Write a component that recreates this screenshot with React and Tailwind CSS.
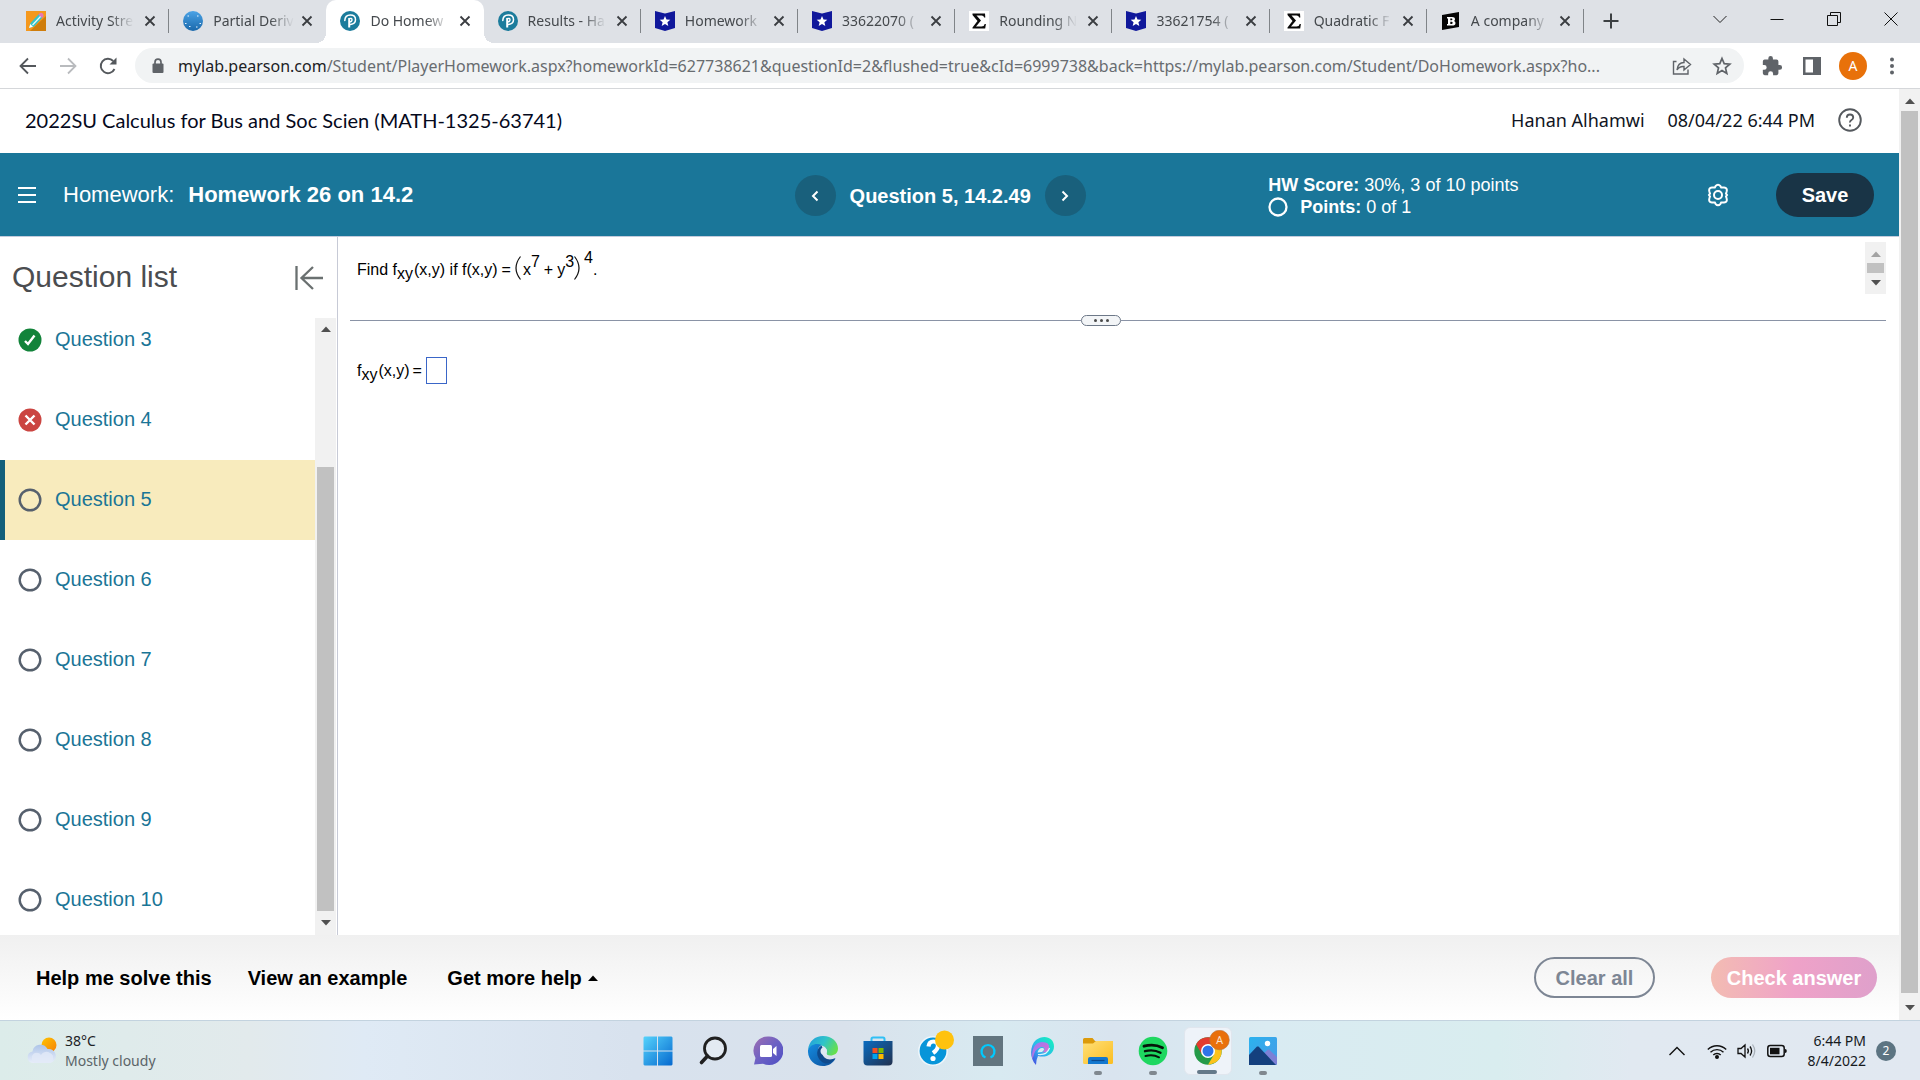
import React from "react";

const ui = "font-['Noto_Sans','Open_Sans',sans-serif]";

/* ---------- favicons ---------- */

const PencilFav = () => (
  <svg viewBox="0 0 20 20" className="size-5 shrink-0">
    <rect width="20" height="20" fill="#f5981d" />
    <path d="M20 5v15H4z" fill="#cf7d0c" />
    <path d="M3 17l1.500-5 8.500-9 3.500 3.500-8.500 9z" fill="#35c4c9" />
    <path d="M6.500 14l8.500-9" stroke="#eafafa" strokeWidth="1.200" />
    <path d="M12.500 3.500l1.500-1.500q1.500-.6 2.700.5t.8 2.700L16 7z" fill="#e678b4" />
    <path d="M3 17l1.300-4 2.700 2.700z" fill="#fff" />
  </svg>
);
const GlobeFav = () => (
  <svg viewBox="0 0 20 20" className="size-5 shrink-0">
    <defs>
      <linearGradient id="globe" x1="0" y1="0" x2="0" y2="1">
        <stop offset="0" stopColor="#4ba3e6" />
        <stop offset="1" stopColor="#1a68ab" />
      </linearGradient>
    </defs>
    <circle cx="10" cy="10" r="10" fill="url(#globe)" />
    <path d="M4.500 5h1.500M14 5h1.500M2 12.500h1.500M16.500 12.500h1.500M6 15.500h1.500M13 16h1.500" stroke="#e8f4ff" />
  </svg>
);
const PearsonFav = () => (
  <svg viewBox="0 0 20 20" className="size-5 shrink-0">
    <circle cx="10" cy="10" r="10" fill="#1c7c9c" />
    <path d="M4.800 9.500Q5 4 10.300 4t5.200 4.700q0 4-5 4.800" fill="none" stroke="#fff" strokeWidth="1.500" strokeLinecap="round" />
    <path d="M9.200 7v9.500" stroke="#fff" strokeWidth="2" />
    <path d="M9 7.600q3-.9 3 1.200t-2.500 2" fill="none" stroke="#fff" strokeWidth="1.400" />
  </svg>
);
const StarFav = () => (
  <svg viewBox="0 0 20 20" className="size-5 shrink-0">
    <path d="M0 0l10 2.500L20 0v17l-10 3-10-3z" fill="#10189b" />
    <path d="M10 5l1.500 3.500 3.800.3-2.900 2.500.9 3.700L10 13l-3.300 2 .9-3.700-2.900-2.500 3.800-.3z" fill="#fff" />
  </svg>
);
const SigmaFav = () => (
  <svg viewBox="0 0 20 20" className="size-5 shrink-0">
    <rect width="20" height="20" fill="#fff" />
    <path d="M3.500 2.500h12.500l.3 4h-1.200q-.3-2-2.500-2H7.500l4.500 5-5 6h5.500q2.700 0 3.200-2.500h1.200l-.7 4.500H3.500v-1l5-6.500-5-6z" fill="#0a0a0a" />
  </svg>
);
const BartlebyFav = () => (
  <svg viewBox="0 0 20 20" className="size-5 shrink-0">
    <path d="M1 4l17-3v15L1 19z" fill="#050505" />
    <path d="M6 6h5q3 0 3 2.200 0 1.300-1 1.700 1.500.4 1.500 2 0 2.600-3.500 2.600H6v-1.500h1V7.500H6zm3.300 1.500v1.700h1.200q.9 0 .9-.9t-.9-.8zm0 3.200V13h1.300q1 0 1-1.200t-1-1.100z" fill="#fff" fillRule="evenodd" />
  </svg>
);

const tabs = [
  { Icon: PencilFav, title: "Activity Stre" },
  { Icon: GlobeFav, title: "Partial Deriv" },
  { Icon: PearsonFav, title: "Do Homew", active: true },
  { Icon: PearsonFav, title: "Results - Ha" },
  { Icon: StarFav, title: "Homework" },
  { Icon: StarFav, title: "33622070 (" },
  { Icon: SigmaFav, title: "Rounding N" },
  { Icon: StarFav, title: "33621754 (" },
  { Icon: SigmaFav, title: "Quadratic F" },
  { Icon: BartlebyFav, title: "A company" },
];

const CloseIcon = () => (
  <svg viewBox="0 0 12 12" className="size-3">
    <path d="M1.500 1.500l9 9M10.500 1.500l-9 9" stroke="#3a3d41" strokeWidth="1.800" />
  </svg>
);

function TabStrip() {
  return (
    <div className="flex h-[43px] bg-[#dee1e6]">
      <div role="tablist" className="flex min-w-0 flex-1 pl-3">
        {tabs.map(({ Icon, title, active }, i) => (
          <div
            key={i}
            className={
              active
                ? "relative flex min-w-0 flex-1 items-center rounded-t-[10px] bg-white pr-[13px] pb-0.5 pl-3.5"
                : "flex min-w-0 flex-1 items-center pr-[13px] pb-0.5 pl-3.5"
            }
          >
            {active && (
              <>
                <span className="absolute bottom-0 -left-2.5 size-2.5 bg-[radial-gradient(circle_at_0_0,#dee1e6_10px,white_10px)]" />
                <span className="absolute -right-2.5 bottom-0 size-2.5 bg-[radial-gradient(circle_at_100%_0,#dee1e6_10px,white_10px)]" />
              </>
            )}
            <button role="tab" aria-selected={!!active} className="flex min-w-0 flex-1 items-center gap-2.5">
              <Icon />
              <span className="flex-1 text-left text-sm whitespace-nowrap text-[#45494d] [mask-image:linear-gradient(to_right,black_70%,transparent)]">
                {title}
              </span>
            </button>
            <button aria-label="Close tab" className="ml-2.5 flex size-3 items-center justify-center">
              <CloseIcon />
            </button>
            {i !== 1 && !active && <span className="-mr-[13px] ml-3 h-6 w-px bg-[#808488]" />}
          </div>
        ))}
      </div>
      <div className="flex w-[336px] items-center pb-0.5">
        <button aria-label="New tab" className="ml-[19px] flex size-4 items-center justify-center">
          <svg viewBox="0 0 16 16" className="size-4"><path d="M8 .5v15M.5 8h15" stroke="#3c4043" strokeWidth="2" /></svg>
        </button>
        <div className="ml-auto flex items-start gap-[43px] pr-[22px] pb-1">
          <button aria-label="Search tabs"><svg viewBox="0 0 14 14" className="size-3.5" fill="none" stroke="#222"><path d="M.5 4L7 10.500 13.500 4" /></svg></button>
          <button aria-label="Minimize"><svg viewBox="0 0 14 14" className="size-3.5" stroke="#111"><path d="M.5 7.500h13" /></svg></button>
          <button aria-label="Restore"><svg viewBox="0 0 14 14" className="size-3.5" fill="none" stroke="#111"><path d="M.5 3.500h10v10H.5zM3.500 3.500v-3h10v10h-3" /></svg></button>
          <button aria-label="Close window"><svg viewBox="0 0 14 14" className="size-3.5" stroke="#111"><path d="M.5 .5l13 13M13.500 .5l-13 13" /></svg></button>
        </div>
      </div>
    </div>
  );
}

function Toolbar() {
  return (
    <div className="flex items-center border-b border-[#d5d7da] bg-white py-[5px] pr-[25px]">
      <div className="flex w-[135px] items-center gap-5 pl-[18px]">
        <button aria-label="Back"><svg viewBox="0 0 20 20" className="size-5" fill="none" stroke="#54585c" strokeWidth="1.800"><path d="M18 10H3M10 2.500L2.500 10l7.500 7.500" /></svg></button>
        <button aria-label="Forward"><svg viewBox="0 0 20 20" className="size-5" fill="none" stroke="#b9bbbe" strokeWidth="1.800"><path d="M2 10h15M10 2.500l7.500 7.500-7.500 7.500" /></svg></button>
        <button aria-label="Reload"><svg viewBox="0 0 20 20" className="size-5"><path d="M16.500 13a7.200 7.200 0 1 1-1.300-8" fill="none" stroke="#54585c" strokeWidth="1.900" /><path d="M18.500 1.500v7h-7z" fill="#54585c" /></svg></button>
      </div>
      <div className="flex h-[35px] min-w-0 flex-1 items-center rounded-full bg-[#f1f3f4] pr-3 pl-4">
        <svg viewBox="0 0 14 16" className="h-4 w-3.5 shrink-0"><rect x="1.500" y="5.500" width="11" height="9.500" rx="1" fill="#5f6368" /><path d="M4 6V4.200a3 3 0 0 1 6 0V6" fill="none" stroke="#5f6368" strokeWidth="1.700" /></svg>
        <span className="ml-[13px] min-w-0 flex-1 overflow-hidden text-base whitespace-nowrap text-[#686c70]">
          <span className="text-[#202124]">mylab.pearson.com</span>/Student/PlayerHomework.aspx?homeworkId=627738621&amp;questionId=2&amp;flushed=true&amp;cId=6999738&amp;back=https://mylab.pearson.com/Student/DoHomework.aspx?ho...
        </span>
        <div className="flex gap-5">
          <button aria-label="Share"><svg viewBox="0 0 20 20" className="size-5" fill="none" stroke="#5f6368" strokeWidth="1.400"><path d="M4.500 5.500h-3V18h14.500v-4.500" /><path d="M5 14q.8-7.500 7-7.500V3l6.500 5.500L12 14v-3.500Q7.500 10 5 14z" /></svg></button>
          <button aria-label="Bookmark"><svg viewBox="0 0 20 20" className="size-5" fill="none" stroke="#5f6368" strokeWidth="1.700"><path d="M10 2.500l2.200 5.200 5.600.5-4.300 3.700 1.300 5.500L10 14.500l-4.800 2.900 1.300-5.500-4.300-3.700 5.600-.5z" /></svg></button>
        </div>
      </div>
      <div className="flex items-center pl-[17px]">
        <button aria-label="Extensions"><svg viewBox="0 0 24 24" className="size-[22px]" fill="#5f6368"><path d="M20.500 11H19V7a2 2 0 0 0-2-2h-4V3.500a2.500 2.500 0 0 0-5 0V5H4a2 2 0 0 0-2 2v3.800h1.500a2.700 2.700 0 0 1 0 5.400H2V20a2 2 0 0 0 2 2h3.800v-1.500a2.700 2.700 0 0 1 5.400 0V22H17a2 2 0 0 0 2-2v-4h1.500a2.500 2.500 0 0 0 0-5z" /></svg></button>
        <button aria-label="Side panel" className="ml-5"><svg viewBox="0 0 18 18" className="size-[18px]"><path d="M0 0h18v18H0zM2.500 2.500v13H10v-13z" fill="#5f6368" fillRule="evenodd" /></svg></button>
        <button aria-label="Profile" className="ml-[18px] flex size-7 items-center justify-center rounded-full bg-[#e8710a] text-sm text-white">A</button>
        <button aria-label="Menu" className="ml-[22px]"><svg viewBox="0 0 6 18" className="h-[18px] w-1.5" fill="#5f6368"><circle cx="3" cy="2.500" r="2" /><circle cx="3" cy="9" r="2" /><circle cx="3" cy="15.500" r="2" /></svg></button>
      </div>
    </div>
  );
}

/* ---------- page ---------- */

const Up = ({ color = "#505050" }) => <svg viewBox="0 0 10 6" className="h-1.5 w-2.5 shrink-0"><path d="M0 6l5-5.500L10 6z" fill={color} /></svg>;
const Down = ({ color = "#505050" }) => <svg viewBox="0 0 10 6" className="h-1.5 w-2.5 shrink-0"><path d="M0 0l5 5.500L10 0z" fill={color} /></svg>;

const OpenCircle = () => <svg viewBox="0 0 24 24" className="size-6" fill="none" stroke="#56606d" strokeWidth="2.400"><circle cx="12" cy="12" r="10.300" /></svg>;
const Correct = () => <svg viewBox="0 0 24 24" className="size-6" fill="none"><circle cx="12" cy="12" r="11.500" fill="#12833a" /><path d="M7 13l3 3 6.500-8.500" stroke="#fff" strokeWidth="2.400" /></svg>;
const Wrong = () => <svg viewBox="0 0 24 24" className="size-6" fill="none"><circle cx="12" cy="12" r="11.500" fill="#cb4541" /><path d="M7.500 7.500l9 9M16.500 7.500l-9 9" stroke="#fff" strokeWidth="2.400" /></svg>;

const questions = [3, 4, 5, 6, 7, 8, 9, 10];

function Sidebar() {
  return (
    <aside className="flex w-[338px] shrink-0 flex-col border-r border-[#c7cad6]">
      <div className="flex h-[81px] shrink-0 items-center justify-between pr-3.5 pl-3">
        <h2 className="pb-0.5 text-3xl text-[#4b4d50]">Question list</h2>
        <button aria-label="Collapse question list">
          <svg viewBox="0 0 28 26" className="h-[26px] w-7" fill="none" stroke="#6a7070" strokeWidth="2.300"><path d="M1.500 1v24M28 13H6M18 2L6.500 13 18 24" /></svg>
        </button>
      </div>
      <div className="flex min-h-0 flex-1">
        <ul className="-mt-[18px] min-w-0 flex-1 overflow-hidden">
          {questions.map((n) => (
            <li
              key={n}
              className={n === 5 ? "h-20 border-l-[5px] border-[#135f7a] bg-[#f8ebbd] pl-[13px]" : "h-20 pl-[18px]"}
            >
              <a href="#" className="flex h-full items-center gap-[13px] text-xl text-[#1a7596]">
                {n === 3 ? <Correct /> : n === 4 ? <Wrong /> : <OpenCircle />}
                <span className="pb-0.5">Question {n}</span>
              </a>
            </li>
          ))}
        </ul>
        <div className="mr-px flex w-[21px] flex-col items-center bg-[#f1f1f1] pt-2 pb-[9px]">
          <Up />
          <div className="mt-[135px] mb-[9px] w-[17px] flex-1 bg-[#c1c1c1]" />
          <Down />
        </div>
      </div>
    </aside>
  );
}

const Fxy = () => (
  <>f<span className="align-[-4px] text-base leading-none">xy</span><span className="pl-px">(x,y)</span></>
);
const Power = ({ children }) => <span className="align-[8px] text-base leading-none">{children}</span>;

function Problem() {
  return (
    <main className="flex min-w-0 flex-1 flex-col pr-[13px] pl-3">
      <div className="flex h-[78px] justify-between pt-[5px] pl-[7px]">
        <p className="text-base leading-[56px] text-black">
          Find <Fxy /> if f(x,y)<span className="px-1">=</span>
          <svg viewBox="0 0 6 24" className="inline h-6 w-1.5 align-[-5px]" fill="none" stroke="#111" strokeWidth="1.200"><path d="M5.500 .5q-9 11.500 0 23" /></svg>
          <span className="pl-0.5">x<Power>7</Power></span><span className="px-1">+</span>y<Power>3</Power>
          <svg viewBox="0 0 6 24" className="inline h-6 w-1.5 align-[-5px]" fill="none" stroke="#111" strokeWidth="1.200"><path d="M.5 .5q9 11.500 0 23" /></svg>
          <span className="pl-1 align-[12px] text-base leading-none">4</span>.
        </p>
        <div className="flex h-[52px] w-[21px] flex-col items-center bg-[#f1f1f1] pt-[9px] pb-2">
          <Up color="#a3a3a3" />
          <div className="mt-1.5 h-2.5 w-[17px] bg-[#c1c1c1]" />
          <div className="mt-auto flex"><Down /></div>
        </div>
      </div>
      <div className="flex items-center">
        <div className="h-px flex-[731] bg-[#8a93a6]" />
        <button aria-label="Resize panes" className="flex h-[11px] w-10 items-center justify-center gap-[3px] rounded-full border border-[#6d7888] bg-[#f3f5f7]">
          <span className="size-[3px] rounded-full bg-[#4a4a4a]" />
          <span className="size-[3px] rounded-full bg-[#4a4a4a]" />
          <span className="size-[3px] rounded-full bg-[#4a4a4a]" />
        </button>
        <div className="h-px flex-[765] bg-[#8a93a6]" />
      </div>
      <div className="flex items-center pt-[31px] pl-[7px] text-base text-black">
        <label htmlFor="answer"><Fxy /><span className="pl-[3px]">=</span></label>
        <input id="answer" className="ml-1 h-[27px] w-[21px] border border-[#3a66c8] bg-white outline-none" />
      </div>
    </main>
  );
}

function Banner() {
  return (
    <div className="grid h-[84px] shrink-0 grid-cols-[795fr_474fr_631fr] items-center border-b border-[#c3cbdc] bg-[#1a7699] text-white">
      <div className="flex items-center pl-4">
        <button aria-label="Menu"><svg viewBox="0 0 22 18" className="h-[18px] w-[22px]" stroke="#fff" strokeWidth="2"><path d="M2 2h18M2 9h18M2 16h18" /></svg></button>
        <h1 className="ml-[25px] flex gap-3.5 text-[22px]">Homework: <b>Homework 26 on 14.2</b></h1>
      </div>
      <div className="flex items-center gap-3.5 pt-0.5 text-xl font-bold">
        <button aria-label="Previous question" className="flex size-[41px] items-center justify-center rounded-full bg-[#19607c]">
          <svg viewBox="0 0 8 12" className="h-3 w-2" fill="none" stroke="#fff" strokeWidth="2"><path d="M6.500 1.500L2 6l4.500 4.500" /></svg>
        </button>
        <span>Question 5, 14.2.49</span>
        <button aria-label="Next question" className="flex size-[41px] items-center justify-center rounded-full bg-[#19607c]">
          <svg viewBox="0 0 8 12" className="h-3 w-2" fill="none" stroke="#fff" strokeWidth="2"><path d="M1.500 1.500L6 6l-4.500 4.500" /></svg>
        </button>
      </div>
      <div className="flex items-center pr-[25px]">
        <div className="flex-1 pt-0.5 text-lg leading-[22px]">
          <div><b>HW Score:</b> 30%, 3 of 10 points</div>
          <div className="flex items-center gap-3">
            <svg viewBox="0 0 20 20" className="size-5" fill="none" stroke="#fff" strokeWidth="2.300"><circle cx="10" cy="10" r="8.500" /></svg>
            <span><b>Points:</b> 0 of 1</span>
          </div>
        </div>
        <button aria-label="Settings">
          <svg viewBox="0 0 24 24" className="size-6" fill="none" stroke="#fff" strokeWidth="2"><path d="M9.500 3.200Q12 .2 14.500 3.200L15.200 4.600 18 4.500Q21.800 5 20.600 8.800L20 10.500 21 12 20 13.500 20.600 15.200Q21.800 19 18 19.500L15.200 19.400 14.500 20.800Q12 23.800 9.500 20.800L8.800 19.400 6 19.500Q2.200 19 3.400 15.200L4 13.500 3 12 4 10.500 3.400 8.800Q2.200 5 6 4.500L8.800 4.600z" /><circle cx="12" cy="12" r="4" /></svg>
        </button>
        <button className="ml-[46px] h-11 w-[98px] rounded-full bg-[#193446] text-xl font-bold">Save</button>
      </div>
    </div>
  );
}

function Footer() {
  return (
    <footer className="flex h-[85px] shrink-0 items-center bg-linear-to-b from-[#f0f0f0] to-white pr-[22px] pl-9 text-xl font-bold text-black">
      <div className="flex flex-1 items-center gap-9">
        <button>Help me solve this</button>
        <button>View an example</button>
        <button className="ml-1 flex items-center gap-1.5">Get more help <svg viewBox="0 0 10 6" className="h-1.5 w-2.5"><path d="M0 6l5-5.500L10 6z" fill="#000" /></svg></button>
      </div>
      <button className="h-[41px] w-[121px] rounded-full border-2 border-[#7d8694] text-[#7d8694]">Clear all</button>
      <button className="ml-14 h-[41px] w-[166px] rounded-full bg-linear-to-r from-[#f3bcb2] via-[#efa2c8] to-[#dfa0cb] text-white">Check answer</button>
    </footer>
  );
}

/* ---------- taskbar ---------- */

const WindowsIcon = () => (
  <svg viewBox="0 0 30 30" className="size-[30px]">
    <defs><linearGradient id="win" x1="0" y1="0" x2="1" y2="1"><stop offset="0" stopColor="#55d3fc" /><stop offset="1" stopColor="#0669cf" /></linearGradient></defs>
    <path d="M1.500 .5H14v14H.5v-13zM15 .5h13.500l1 1v13H15zM.5 15.500H14v14H1.500l-1-1zM15 15.500h14.500v13l-1 1H15z" fill="url(#win)" />
  </svg>
);
const SearchIcon = () => (
  <svg viewBox="0 0 30 30" className="size-[30px]" fill="none" stroke="#202020" strokeWidth="2.800" strokeLinecap="round"><circle cx="17" cy="12.500" r="10.500" fill="#e3eaf2" /><path d="M9.500 20L3.500 26.500" strokeWidth="3.600" /></svg>
);
const ChatIcon = () => (
  <svg viewBox="0 0 30 30" className="size-[30px]">
    <defs><linearGradient id="chat" x1="0" y1="0" x2="1" y2="1"><stop offset="0" stopColor="#a06fb0" /><stop offset=".5" stopColor="#6c61c4" /><stop offset="1" stopColor="#4c4ec4" /></linearGradient></defs>
    <path d="M15 .5a14.300 14.300 0 1 1-5 27.200L1 28.500 2.500 22A14.300 14.300 0 0 1 15 .5z" fill="url(#chat)" />
    <rect x="7" y="9" width="12" height="12" rx="1.500" fill="#fff" /><path d="M20 13l3.500-3v10L20 17z" fill="#fff" />
  </svg>
);
const EdgeIcon = () => (
  <svg viewBox="0 0 30 30" className="size-[30px]">
    <defs>
      <linearGradient id="edgeA" x1="0" y1=".2" x2="1" y2=".6"><stop offset="0" stopColor="#249fdc" /><stop offset=".5" stopColor="#2fc4c9" /><stop offset="1" stopColor="#67e04b" /></linearGradient>
      <linearGradient id="edgeB" x1="0" y1="0" x2="1" y2="1"><stop offset="0" stopColor="#158ce0" /><stop offset="1" stopColor="#0c4e9a" /></linearGradient>
    </defs>
    <path d="M0 14C1 5 7 0 15 0c9 0 15 6 15 12.500 0 5-4 7-7.500 7-3 0-4.500-1-4-2.500.8-1.500 1-6-5-7.500C8 8 2 10 0 14z" fill="url(#edgeA)" />
    <path d="M0 14C2 9 8 6.500 13.500 9c-5 2.500-4.500 9.500-.5 13 5 4.500 11 2.500 14.500.5C25 27.500 20 30 15 30 6 30-.5 23 0 14z" fill="url(#edgeB)" />
    <path d="M13.500 9.500c-6 3.500-5.500 11.500 0 16 5 4 10 2 14-3.500-3.500 2-8.500 2-11-.5-2.500-2.500-2.500-4-.5-6.500z" fill="#0f4a8c" />
    <path d="M14.500 11.500c2 0 4.500 1 4.500 4-.5 2.500-.8 3.300 1.500 4-4 .8-8-.5-8-4.500 0-1.500.8-2.800 2-3.500z" fill="#dfe9f3" />
  </svg>
);
const StoreIcon = () => (
  <svg viewBox="0 0 30 30" className="size-[30px]">
    <defs><linearGradient id="store" x1="0" y1="0" x2="1" y2="1"><stop offset="0" stopColor="#0a6cc0" /><stop offset="1" stopColor="#22314f" /></linearGradient></defs>
    <path d="M8.500 6V3q0-1.500 1.500-1.500h10Q21.500 1.500 21.500 3v3" fill="none" stroke="#30c0f5" strokeWidth="2" />
    <path d="M.5 5h29v20.500q0 4-4 4h-21q-4 0-4-4z" fill="url(#store)" />
    <path d="M9.500 12h5v5h-5z" fill="#f25022" /><path d="M15.500 12h5v5h-5z" fill="#7fba00" /><path d="M9.500 18h5v5h-5z" fill="#00a4ef" /><path d="M15.500 18h5v5h-5z" fill="#ffb900" />
  </svg>
);
const HelpIcon = () => (
  <svg viewBox="0 0 38 36" className="h-9 w-[38px]">
    <circle cx="15" cy="21" r="14.200" fill="#0795d9" stroke="#eef6fb" strokeWidth="1.600" />
    <path d="M10.500 16.500q.5-5 5-5t4.500 4-5 7.500" fill="none" stroke="#fff" strokeWidth="4.200" /><circle cx="15" cy="28.500" r="2.600" fill="#fff" />
    <circle cx="26.500" cy="10" r="9.500" fill="#ffc20e" />
  </svg>
);
const AlexaIcon = () => (
  <svg viewBox="0 0 30 30" className="size-[30px]"><rect width="30" height="30" fill="#62757f" /><path d="M12.500 21.500A6.500 6.500 0 1 1 17.500 21.500" fill="none" stroke="#00caff" strokeWidth="2.200" /></svg>
);
const PicsartIcon = () => (
  <svg viewBox="0 0 30 30" className="size-[30px]">
    <defs>
      <linearGradient id="pic" x1=".8" y1="0" x2="0" y2="1"><stop offset="0" stopColor="#17eec0" /><stop offset=".5" stopColor="#2cb6ee" /><stop offset="1" stopColor="#4a3fe0" /></linearGradient>
      <linearGradient id="picB" x1="0" y1="0" x2="1" y2="1"><stop offset="0" stopColor="#8e7cf7" /><stop offset="1" stopColor="#ef6bc8" /></linearGradient>
    </defs>
    <path d="M8 29C1 22 2 9 8 4c8-6 18-2.500 18 6.500 0 8-8 11.500-16 9.500q-2 4-2 9z" fill="url(#pic)" />
    <path d="M4.500 23C3 14 6.500 6.500 14 6q8 0 7 6-1 4.500-7 4.500 3-2 2.500-4T13 11Q7 12 4.500 23z" fill="url(#picB)" />
    <path d="M10 18.500q9 1 11.500-6.500" fill="none" stroke="#e2f2f8" strokeWidth="1.200" />
    <path d="M9.500 16.500q1.500-5 5-4.500t-.5 4z" fill="#d9ecf4" />
  </svg>
);
const FolderIcon = () => (
  <svg viewBox="0 0 30 30" className="size-[30px]">
    <defs><linearGradient id="fold" x1="0" y1="0" x2="1" y2="1"><stop offset="0" stopColor="#ffe07a" /><stop offset="1" stopColor="#fbbd1f" /></linearGradient></defs>
    <path d="M0 3.500Q0 2 1.500 2h8L12 5h17v6H0z" fill="#dc9a0b" /><path d="M0 7.500h10L13 5h17v21.500q0 1.500-1.500 1.500h-27Q0 28 0 26.500z" fill="url(#fold)" />
    <path d="M5 28v-5q0-2 2-2h16q2 0 2 2v5z" fill="#1378cf" /><path d="M8.500 24.500h13" stroke="#0b4a8f" strokeWidth="1.200" />
  </svg>
);
const SpotifyIcon = () => (
  <svg viewBox="0 0 30 30" className="size-[30px]"><circle cx="15" cy="15" r="14.300" fill="#1ed760" /><g fill="none" stroke="#06130a" strokeLinecap="round"><path d="M6 10.200q10-2.800 18.500 1.500" strokeWidth="2.900" /><path d="M7 15.200q8.500-2.300 15.500 1.500" strokeWidth="2.400" /><path d="M7.500 20q7.500-2 13.500 1.300" strokeWidth="2" /></g></svg>
);
const ChromeIcon = () => (
  <svg viewBox="0 0 36 36" className="size-9">
    <circle cx="14" cy="21" r="13.700" fill="#249a48" />
    <path d="M2.100 14.200A13.700 13.700 0 0 1 25.900 14.200L14 14.500 8 24.500z" fill="#e33b2e" />
    <path d="M25.900 14.200A13.700 13.700 0 0 1 14 34.700L20 24.500 14 14.200z" fill="#fcc21b" />
    <circle cx="14" cy="21" r="7" fill="#fff" /><circle cx="14" cy="21" r="5.500" fill="#2f74e8" />
    <circle cx="25.500" cy="10" r="9.800" fill="#e9700c" stroke="#b8713a" strokeWidth=".6" />
    <text x="25.500" y="13.800" fontSize="11" fontFamily="Roboto, sans-serif" fill="#fbe3cf" textAnchor="middle">A</text>
  </svg>
);
const PhotosIcon = () => (
  <svg viewBox="0 0 30 30" className="size-[30px]">
    <defs><linearGradient id="ph" x1="0" y1="0" x2="1" y2="1"><stop offset="0" stopColor="#2bb2ee" /><stop offset="1" stopColor="#4a9ae6" /></linearGradient></defs>
    <rect x="1" y="1" width="28" height="28" rx="1.500" fill="url(#ph)" /><path d="M14 19l6-5.500h1L29 21v7.500H14z" fill="#7c80d6" /><path d="M1 19l8-8.500h1.500L28 29H1z" fill="#14407e" /><circle cx="19.500" cy="7.500" r="2.700" fill="#fff" />
  </svg>
);

const apps = [
  { name: "Start", Icon: WindowsIcon },
  { name: "Search", Icon: SearchIcon },
  { name: "Chat", Icon: ChatIcon },
  { name: "Edge", Icon: EdgeIcon },
  { name: "Microsoft Store", Icon: StoreIcon },
  { name: "Get Help", Icon: HelpIcon, raised: true },
  { name: "Alexa", Icon: AlexaIcon },
  { name: "Picsart", Icon: PicsartIcon },
  { name: "File Explorer", Icon: FolderIcon, running: true },
  { name: "Spotify", Icon: SpotifyIcon, running: true },
  { name: "Chrome", Icon: ChromeIcon, raised: true, current: true },
  { name: "Photos", Icon: PhotosIcon, running: true },
];

function Taskbar() {
  return (
    <div className="grid h-[60px] shrink-0 grid-cols-[1fr_auto_1fr] items-center border-t border-[#c3d3df] bg-[linear-gradient(90deg,#dcecea_0%,#e2eaec_13%,#dfeaf5_19%,#d8e2ee_33%,#d9e2ec_44%,#d8eaf1_52%,#d9e4ef_58%,#d9ebf2_66%,#d9edef_78%,#e1e9f1_85%,#e1e8f1_100%)]">
      <button className="flex items-center gap-2 pl-[27px] text-left text-sm leading-5">
        <svg viewBox="0 0 30 28" className="h-7 w-[30px]">
          <defs>
            <linearGradient id="sun" x1="0" y1="0" x2="1" y2="1"><stop offset="0" stopColor="#ffc400" /><stop offset="1" stopColor="#f5800a" /></linearGradient>
            <linearGradient id="cloud" x1="0" y1="0" x2="0" y2="1"><stop offset="0" stopColor="#adc4e8" /><stop offset="1" stopColor="#e8eefa" /></linearGradient>
          </defs>
          <circle cx="22" cy="8" r="7.500" fill="url(#sun)" />
          <path d="M6 26a5.800 5.800 0 0 1-.5-11.500A8 8 0 0 1 20.500 12a6 6 0 0 1 2.500 14z" fill="url(#cloud)" />
          <path d="M8 26a5.500 5.500 0 0 1 0-10q4-1 6 2a6 6 0 0 1 9-2 5.500 5.500 0 0 1 0 10z" fill="#e2eaf8" opacity=".8" />
        </svg>
        <span className="text-[#1c2226]"><span className="block">38°C</span><span className="block text-[#5b6468]">Mostly cloudy</span></span>
      </button>
      <nav className="flex gap-[7px]">
        {apps.map(({ name, Icon, raised, running, current }) => (
          <button
            key={name}
            aria-label={name}
            className={
              current
                ? "relative flex size-12 items-center justify-center rounded-md border border-[#e0e6ee] bg-[#eef3f9] pb-1.5 pl-2"
                : raised
                  ? "relative flex size-12 items-center justify-center pb-1.5 pl-2"
                  : "relative flex size-12 items-center justify-center"
            }
          >
            <Icon />
            {running && <span className="absolute bottom-0 h-1 w-2 rounded-full bg-[#80888f]" />}
            {current && <span className="absolute bottom-0 left-3 h-1 w-5 rounded-full bg-[#647989]" />}
          </button>
        ))}
      </nav>
      <div className="flex items-center justify-end pr-6 text-[#161a1e]">
        <button aria-label="Hidden icons"><svg viewBox="0 0 16 10" className="h-2.5 w-4" fill="none" stroke="#111" strokeWidth="1.400"><path d="M.5 9L8 1.500 15.500 9" /></svg></button>
        <button aria-label="Network and sound" className="ml-[22px] flex items-center gap-2.5">
          <svg viewBox="0 0 20 16" className="h-4 w-5" fill="none" stroke="#111" strokeWidth="1.400"><path d="M.8 6.500a13 13 0 0 1 18.400 0M3.500 9.300a9.200 9.200 0 0 1 13 0M6.300 12a5.200 5.200 0 0 1 7.400 0" /><circle cx="10" cy="14" r="1.300" fill="#111" /></svg>
          <svg viewBox="0 0 20 16" className="h-4 w-5" fill="none" stroke="#111" strokeWidth="1.300"><path d="M1 5.500h3L8 2v12l-4-3.500H1zM10.500 5.500q1.800 2.500 0 5M13 3.500q3.200 4.500 0 9" /><path d="M15.500 1.500q4.500 6.500 0 13" stroke="#aab2ba" /></svg>
          <svg viewBox="0 0 20 14" className="h-3.5 w-5"><rect x=".8" y="1.500" width="16.400" height="11" rx="2.500" fill="none" stroke="#111" strokeWidth="1.500" /><rect x="3" y="3.800" width="9.500" height="6.500" fill="#111" /><path d="M18 5q1.800 0 1.800 2T18 9z" fill="#111" /></svg>
        </button>
        <div className="ml-[21px] text-right text-sm leading-5"><div>6:44 PM</div><div>8/4/2022</div></div>
        <span className="ml-2.5 flex size-5 items-center justify-center rounded-full bg-[#5c7482] text-xs text-white">2</span>
      </div>
    </div>
  );
}

export default function App() {
  return (
    <div className={`flex h-screen flex-col overflow-hidden bg-white ${ui}`}>
      <TabStrip />
      <Toolbar />
      <div className="flex min-h-0 flex-1">
        <div className="flex min-w-0 flex-1 flex-col font-['Liberation_Sans',Arial,sans-serif]">
          <header className="flex h-16 shrink-0 items-center justify-between pr-[37px] pb-0.5 pl-[25px] font-['Noto_Sans','Open_Sans',sans-serif] text-[#101523]">
            <div className="font-['Lato',sans-serif] text-xl text-[#05091c]">2022SU Calculus for Bus and Soc Scien (MATH-1325-63741)</div>
            <div className="flex items-center gap-[23px] text-lg">
              <span>Hanan Alhamwi</span>
              <span>08/04/22 6:44 PM</span>
              <button aria-label="Help"><svg viewBox="0 0 24 24" className="size-6" fill="none" stroke="#55595e" strokeWidth="1.900"><circle cx="12" cy="12" r="10.800" /><path d="M8.800 9.800q0-3.300 3.200-3.300t3.200 3q0 1.500-1.700 2.500T12 14.500" /><path d="M12 16.500v2" /></svg></button>
            </div>
          </header>
          <Banner />
          <div className="flex min-h-0 flex-1">
            <Sidebar />
            <Problem />
          </div>
          <Footer />
        </div>
        <div className="flex w-[21px] shrink-0 flex-col items-center bg-[#f1f1f1] pt-[9px] pb-[9px]">
          <Up />
          <div className="mt-[7px] mb-3 w-[17px] flex-1 bg-[#c1c1c1]" />
          <Down />
        </div>
      </div>
      <Taskbar />
    </div>
  );
}
